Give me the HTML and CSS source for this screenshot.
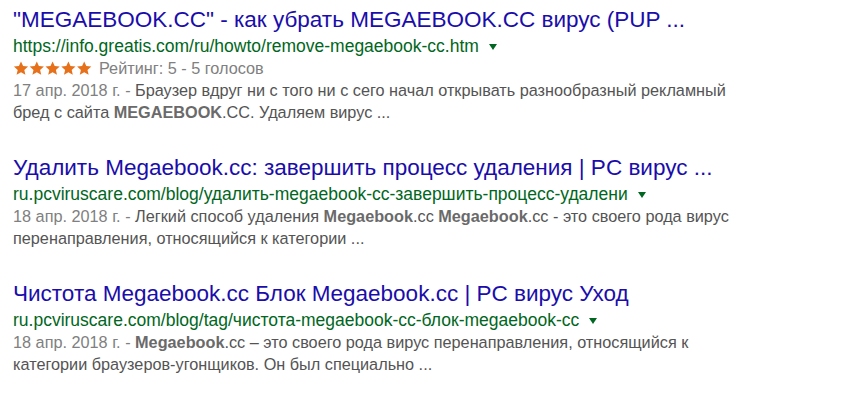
FILE: index.html
```html
<!DOCTYPE html>
<html lang="ru">
<head>
<meta charset="utf-8">
<link rel="stylesheet" href="styles.css">
</head>
<body>
<div class="results">
  <div class="result">
    <a class="title" href="#">"MEGAEBOOK.CC" - как убрать MEGAEBOOK.CC вирус (PUP ...</a>
    <div class="url"><cite>https://info.greatis.com/ru/howto/remove-megaebook-cc.htm</cite><span class="arrow"></span></div>
    <div class="rating">
      <span class="stars">
        <svg width="80" height="14" viewBox="0 0 80 14">
          <g fill="#e7711b">
            <path id="st" d="M8 0.5l2.1 4.6 5 0.5-3.8 3.3 1.1 4.9L8 11.3 3.6 13.8l1.1-4.9L0.9 5.6l5-0.5z"/>
            <use href="#st" x="15.8"/>
            <use href="#st" x="31.6"/>
            <use href="#st" x="47.4"/>
            <use href="#st" x="63.2"/>
          </g>
        </svg>
      </span>
      <span class="rtext">Рейтинг: 5 - 5 голосов</span>
    </div>
    <div class="snippet"><span class="date">17 апр. 2018 г. - </span>Браузер вдруг ни с того ни с сего начал открывать разнообразный рекламный<br>бред с сайта <b>MEGAEBOOK</b>.CC. Удаляем вирус ...</div>
  </div>
  <div class="result">
    <a class="title" href="#">Удалить Megaebook.cc: завершить процесс удаления | PC вирус ...</a>
    <div class="url"><cite>ru.pcviruscare.com/blog/удалить-megaebook-cc-завершить-процесс-удалени</cite><span class="arrow"></span></div>
    <div class="snippet"><span class="date">18 апр. 2018 г. - </span>Легкий способ удаления <b>Megaebook</b>.cc <b>Megaebook</b>.cc - это своего рода вирус<br>перенаправления, относящийся к категории ...</div>
  </div>
  <div class="result">
    <a class="title" href="#">Чистота Megaebook.cc Блок Megaebook.cc | PC вирус Уход</a>
    <div class="url"><cite>ru.pcviruscare.com/blog/tag/чистота-megaebook-cc-блок-megaebook-cc</cite><span class="arrow"></span></div>
    <div class="snippet"><span class="date">18 апр. 2018 г. - </span><b>Megaebook</b>.cc – это своего рода вирус перенаправления, относящийся к<br>категории браузеров-угонщиков. Он был специально ...</div>
  </div>
</div>
</body>
</html>
```

FILE: styles.css
```css
html, body {
  margin: 0;
  padding: 0;
  background: #fff;
}
body {
  font-family: "Liberation Sans", Arial, sans-serif;
}
.results {
  padding: 5px 0 0 13px;
  display: flex;
  flex-direction: column;
  gap: 30px;
}
.result {
  display: flex;
  flex-direction: column;
}
.title {
  font-size: 22.5px;
  line-height: 30px;
  color: #1a0dab;
  text-decoration: none;
  white-space: nowrap;
}
.url {
  font-size: 17.5px;
  line-height: 22px;
  color: #006621;
  display: flex;
  align-items: center;
  white-space: nowrap;
}
.url cite {
  font-style: normal;
}
.arrow {
  display: inline-block;
  width: 0;
  height: 0;
  border-top: 6px solid #006621;
  border-left: 4.5px solid transparent;
  border-right: 4.5px solid transparent;
  margin-left: 10px;
  margin-top: 2px;
}
.rating {
  display: flex;
  align-items: center;
  height: 22px;
  font-size: 16.25px;
  color: #808080;
}
.stars {
  display: flex;
  width: 86px;
}
.stars svg {
  display: block;
}
.snippet {
  font-size: 16.25px;
  line-height: 22px;
  color: #545454;
  white-space: nowrap;
}
.snippet .date {
  color: #808080;
}
.snippet b {
  color: #6a6a6a;
}
```
